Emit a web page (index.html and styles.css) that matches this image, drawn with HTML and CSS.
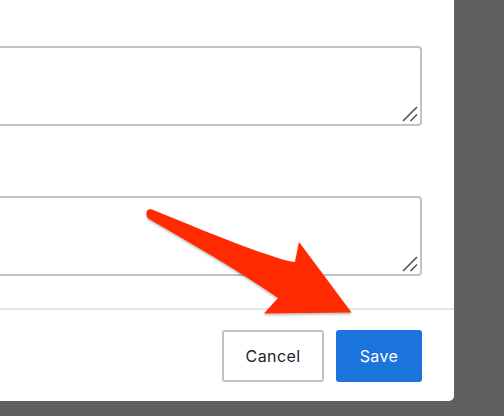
FILE: index.html
```html
<!DOCTYPE html>
<html>
<head>
<meta charset="utf-8">
<link rel="stylesheet" href="styles.css">
</head>
<body>
<div class="modal">
  <div class="body">
    <div class="field"><textarea class="ta"></textarea>
      <svg class="grip" width="18" height="18" viewBox="0 0 18 18"><path d="M2,16 L16,2 M9.5,16 L16,9.5" stroke="#555" stroke-width="1.6" stroke-linecap="butt" fill="none"/></svg>
    </div>
    <div class="field"><textarea class="ta"></textarea>
      <svg class="grip" width="18" height="18" viewBox="0 0 18 18"><path d="M2,16 L16,2 M9.5,16 L16,9.5" stroke="#555" stroke-width="1.6" stroke-linecap="butt" fill="none"/></svg>
    </div>
  </div>
  <div class="footer">
    <button class="btn cancel">Cancel</button>
    <button class="btn save">Save</button>
  </div>
</div>
<svg class="arrow" width="504" height="416" viewBox="0 0 504 416">
  <defs>
    <filter id="sh" x="-10%" y="-10%" width="130%" height="140%">
      <feDropShadow dx="0" dy="1.5" stdDeviation="1.2" flood-color="#000" flood-opacity="0.3"/>
    </filter>
  </defs>
  <path filter="url(#sh)" fill="#ff2a00" d="M146.5,214.5 Q146,208.5 152,209.5 C200,229 240,246 272,256 Q285,261 295,262 L299,242 L351.5,312.5 L264,313.5 L278,298 C235,268 190,243 149,219 Q146.5,217.5 146.5,214.5 Z"/>
</svg>
</body>
</html>
```
FILE: styles.css
```css
html, body {
  margin: 0;
  padding: 0;
}
body {
  background: #5f6062;
  width: 504px;
  height: 416px;
  overflow: hidden;
  position: relative;
  font-family: "Inter", "Liberation Sans", sans-serif;
}
.modal {
  width: 600px;
  height: 401px;
  margin-left: -146px;
  background: #fff;
  border-bottom-right-radius: 5px;
  display: flex;
  flex-direction: column;
}
.body {
  padding: 46px 32px 0 0;
  display: flex;
  flex-direction: column;
  gap: 70px;
  height: 262px;
}
.field {
  display: flex;
  position: relative;
}
.ta {
  flex: 1;
  height: 80px;
  box-sizing: border-box;
  border: 2px solid #b9c3c9;
  border-radius: 4px;
  resize: none;
  background: #fff;
  margin: 0;
}
.grip {
  position: absolute;
  right: 3px;
  bottom: 3px;
}
.footer {
  border-top: 2px solid #e2e6e9;
  display: flex;
  justify-content: flex-end;
  gap: 12px;
  padding: 20px 32px 0 0;
}
.btn {
  height: 52px;
  box-sizing: border-box;
  font-family: "Inter", "Liberation Sans", sans-serif;
  font-size: 16px;
  letter-spacing: 0.4px;
  border-radius: 3px;
  cursor: pointer;
}
.cancel {
  width: 102px;
  background: #fff;
  border: 2px solid #b9c3c9;
  color: #1f2428;
}
.save {
  width: 86px;
  background: #1b74dc;
  border: none;
  color: #fff;
}
.arrow {
  position: absolute;
  left: 0;
  top: 0;
  pointer-events: none;
}
```
